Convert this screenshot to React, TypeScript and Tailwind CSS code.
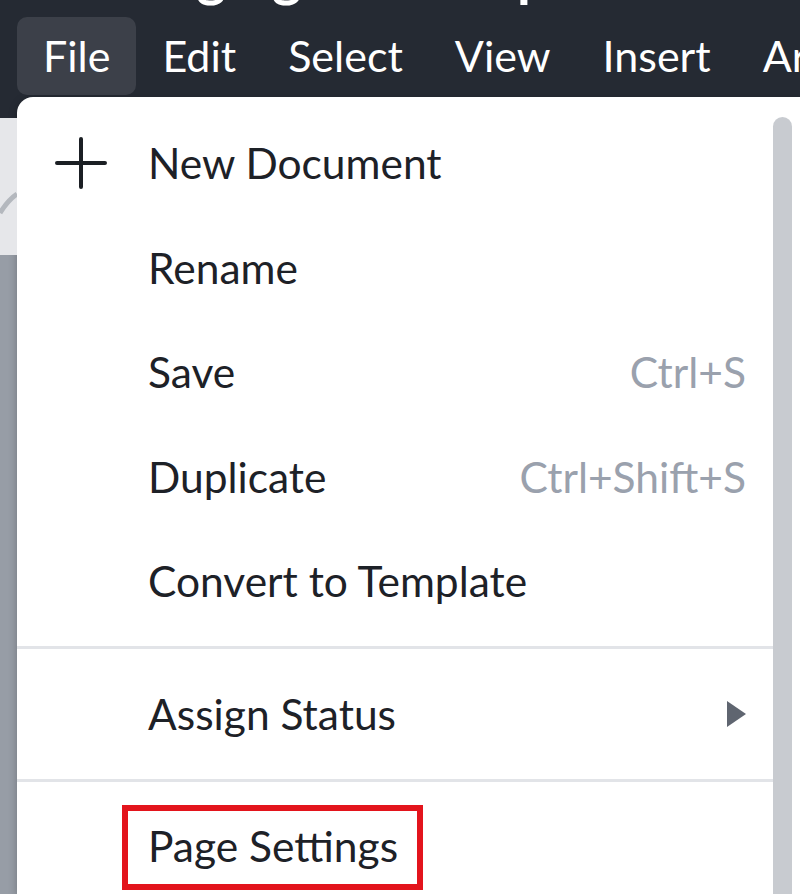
import React from 'react';

const FONT = "font-['Lato','Liberation_Sans',sans-serif]";

const MENUS = ['File', 'Edit', 'Select', 'View', 'Insert', 'Arrange'];

interface Item {
  label: string;
  shortcut?: string;
  icon?: boolean;
  submenu?: boolean;
  marked?: boolean;
}

const GROUPS: Item[][] = [
  [
    { label: 'New Document', icon: true },
    { label: 'Rename' },
    { label: 'Save', shortcut: 'Ctrl+S' },
    { label: 'Duplicate', shortcut: 'Ctrl+Shift+S' },
    { label: 'Convert to Template' },
  ],
  [{ label: 'Assign Status', submenu: true }],
  [{ label: 'Page Settings', marked: true }],
];

const PlusIcon = () => (
  <svg width="52" height="52" viewBox="0 0 52 52" fill="none">
    <path d="M26 2v48M2 26h48" stroke="#1b1f24" strokeWidth="4" strokeLinecap="round" />
  </svg>
);

const MenuRow: React.FC<{ item: Item }> = ({ item }) => (
  <div className="flex items-center h-[104.5px] pl-[38px] pr-[27px]">
    <div className="w-[93px] shrink-0 flex items-center">{item.icon && <PlusIcon />}</div>
    <div className="flex-1 flex items-center justify-between">
      <span className="relative text-[42.5px] text-[#1d2127] leading-none">
        {item.label}
        {item.marked && (
          <span className="absolute -left-[26px] -right-[25px] -top-[20px] -bottom-[22px] border-[6px] border-[#e3141c]" />
        )}
      </span>
      {item.shortcut && <span className="text-[42.5px] text-[#9aa1ad] leading-none">{item.shortcut}</span>}
      {item.submenu && (
        <svg width="19" height="26" viewBox="0 0 19 26">
          <path d="M0 0L19 13L0 26Z" fill="#5f6570" />
        </svg>
      )}
    </div>
  </div>
);

export default function App() {
  return (
    <div className={`w-[800px] h-[894px] overflow-hidden bg-[#252a33] flex flex-col ${FONT}`}>
      {/* clipped window title */}
      <div className="h-[17px] overflow-hidden shrink-0">
        <div className="-mt-[53px] pl-[56px] text-[56px] font-bold text-white leading-[56px] whitespace-nowrap">
          Managing Roadmap Items
        </div>
      </div>

      {/* menu bar */}
      <div className="flex h-[78px] pl-[17px] shrink-0">
        {MENUS.map((m, i) => (
          <div
            key={m}
            className={`flex items-center px-[26px] rounded-[10px] text-[43px] text-white whitespace-nowrap ${
              i === 0 ? 'bg-[#3c4049]' : ''
            }`}
          >
            {m}
          </div>
        ))}
      </div>

      <div className="flex flex-1 mt-[2px] min-h-0">
        {/* page behind the menu */}
        <div className="w-[17px] shrink-0 flex flex-col">
          <div className="h-[21px] bg-[#252a33]" />
          <div className="h-[137px] bg-[#e6e7ea] relative overflow-hidden">
            <svg width="17" height="137" className="absolute inset-0">
              <path d="M0 95 Q8 82 17 76" stroke="#b4b8be" strokeWidth="5" fill="none" />
            </svg>
          </div>
          <div className="flex-1 bg-[#979da6]" />
        </div>

        {/* dropdown */}
        <div className="flex-1 bg-white rounded-tl-[16px] flex shadow-[0_2px_8px_rgba(0,0,0,0.25)]">
          <div className="flex-1 pt-[14px]">
            {GROUPS.map((g, gi) => (
              <div key={gi}>
                {gi > 0 && <div className="my-[12.5px] h-[3px] bg-[#e2e4e8]" />}
                {g.map((it) => (
                  <MenuRow key={it.label} item={it} />
                ))}
              </div>
            ))}
          </div>
          <div className="w-[19px] pt-[20px] shrink-0">
            <div className="h-full bg-[#c8cbd0] rounded-t-full" />
          </div>
          <div className="w-[8px] shrink-0" />
        </div>
      </div>
    </div>
  );
}
